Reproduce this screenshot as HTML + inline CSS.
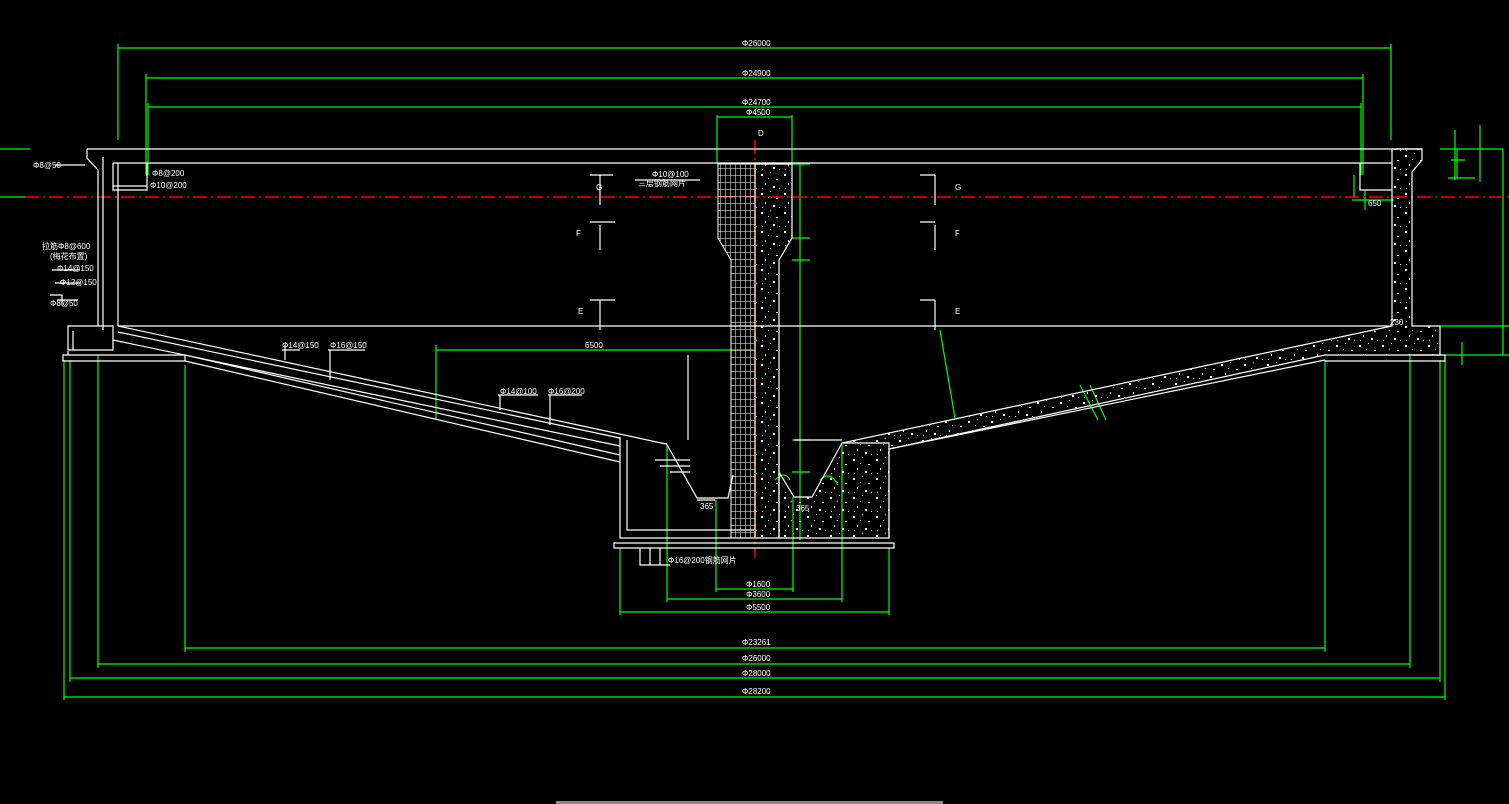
<!DOCTYPE html>
<html><head><meta charset="utf-8"><style>
html,body{margin:0;padding:0;background:#000;width:1509px;height:804px;overflow:hidden}
svg{display:block}
text{font-family:"Liberation Sans","Noto Sans CJK SC",sans-serif;fill:#fff;font-size:8px}
</style></head><body>
<svg width="1509" height="804" viewBox="0 0 1509 804" xmlns="http://www.w3.org/2000/svg">
<defs>
<pattern id="sp" width="23" height="19" patternUnits="userSpaceOnUse">
<rect x="2" y="3" width="2" height="2" fill="#fff"/><rect x="11" y="1" width="1" height="1" fill="#fff"/>
<rect x="17" y="8" width="2" height="1" fill="#fff"/><rect x="6" y="12" width="1" height="2" fill="#fff"/>
<rect x="14" y="15" width="2" height="2" fill="#fff"/><rect x="20" y="17" width="1" height="1" fill="#fff"/>
<rect x="9" y="7" width="1" height="1" fill="#fff"/><rect x="3" y="17" width="1" height="1" fill="#fff"/>
</pattern>
<pattern id="grid" width="5" height="7" patternUnits="userSpaceOnUse">
<path d="M0 0H5M0 0V7" stroke="#fff" stroke-width="1" fill="none"/>
</pattern>
</defs>

<g stroke="#0f0" stroke-width="1.2" fill="none">
<path d="M118 48H1391M118 44V140M1391 44V140"/>
<path d="M146 78H1363M146 74V175M1363 74V175"/>
<path d="M148 107H1361M148 103V175M1361 103V175"/>
<path d="M717 117H792M717 115V163M792 115V163"/>
<path d="M0 149H30M0 197H25"/>
<path d="M1503 149V355M1457 149V178M1440 149H1503M1448 178H1475M1451 160H1465M1455 130V180M1480 125V182"/>
<path d="M1440 326H1509M1445 355H1509M1462 342V365"/>
<path d="M1352 200H1394M1365 210V190M1354 175V198"/>
<path d="M800 164V540M792 164H810M792 238H810M792 260H810M792 440H810M792 472H810"/>
<path d="M436 350H754M436 345V420"/>
<path d="M940 330L955 418"/>
<path d="M1080 385L1098 420M1090 385L1106 420"/>
<path d="M716 589H793M716 500V592M793 497V592"/>
<path d="M667 599H842M667 445V602M842 443V602"/>
<path d="M620 612H889M620 548V615M889 548V615"/>
<path d="M185 648H1325M185 365V652M1325 360V652"/>
<path d="M98 664H1410M98 355V668M1410 355V668"/>
<path d="M70 678H1440M70 360V682M1440 360V682"/>
<path d="M64 697H1445M64 360V700M1445 360V700"/>
<path d="M775 480Q785 470 790 480M820 480Q830 470 838 485"/>
</g>

<g stroke="#f00" stroke-width="1.5" fill="none">
<path d="M25 197H1509" stroke-dasharray="14 4 2 4"/>
<path d="M755 140V558" stroke-dasharray="14 4 2 4"/>
</g>

<g fill="url(#sp)" stroke="#fff" stroke-width="1.2">
<path d="M755 164H792V238L779 260V538H755Z"/>
<path d="M779 440V472L794 497H812L842 443L1392 326V149H1422V160L1412 172V326H1440V355H1325L889 449V538H779Z"/>
</g>
<path d="M718 164H755V538H731V260L718 238Z" fill="url(#grid)" stroke="#fff"/>
<path d="M731 260V538" stroke="#fff" fill="none"/>

<g stroke="#fff" stroke-width="1.2" fill="none">
<path d="M87 149H1422M113 163H1392M118 326H1392"/>
<path d="M87 149V158L98 170V326M103 157V330M113 163V190H147V163M118 163V326M113 186H147"/>
<path d="M68 326H113V350H68ZM73 331V350M68 351V355"/>
<path d="M63 355H185V361H63Z"/>
<path d="M1360 163V190H1392M1412 355H1445V361H1325"/>
<path d="M118 326L666 444M118 332L620 438M113 340L620 446M185 355L620 455M185 361L620 462"/>
<path d="M620 437V538H754M627 440V530H754M614 543H894V548H614Z"/>
<path d="M666 443L697 498H728L733 475M697 500H715M640 548V565H670M650 548V565M660 548V565"/>
<path d="M655 460H690M660 466H690M670 472H690"/>
<path d="M842 443H889V538M889 449L1325 360"/>
<path d="M794 440H842"/>
<path d="M55 165H85M50 295H62V305M52 270H80M55 283H80M57 300H78"/>
<path d="M635 180H700M600 175V205M590 175H613M600 225V250M590 222H615M600 300V330M590 300H615M935 175V205M920 175H935M935 225V250M920 222H935M935 300V330M920 300H935"/>
<path d="M282 350L300 350M285 345V360M328 350H365M330 350V380M498 395H538M500 395V410M548 395H582M550 395V425"/>
<path d="M688 355V440"/>
</g>

<text x="742" y="46">Φ26000</text>
<text x="742" y="76">Φ24900</text>
<text x="742" y="105">Φ24700</text>
<text x="746" y="115">Φ4500</text>
<text x="758" y="136" font-size="10">D</text>
<text x="33" y="168" font-size="7">Φ8@50</text>
<text x="152" y="176" font-size="7">Φ8@200</text>
<text x="150" y="188" font-size="7">Φ10@200</text>
<text x="652" y="177" font-size="7">Φ10@100</text>
<text x="638" y="186" font-size="7">三层钢筋网片</text>
<text x="42" y="249" font-size="7">拉筋Φ8@600</text>
<text x="50" y="259" font-size="7">(梅花布置)</text>
<text x="57" y="271" font-size="7">Φ14@150</text>
<text x="60" y="285" font-size="7">Φ12@150</text>
<text x="50" y="306" font-size="7">Φ8@50</text>
<text x="596" y="190">G</text><text x="955" y="190">G</text>
<text x="576" y="236">F</text><text x="955" y="236">F</text>
<text x="578" y="314">E</text><text x="955" y="314">E</text>
<text x="585" y="348" font-size="7">6500</text>
<text x="282" y="348" font-size="7">Φ14@150</text>
<text x="330" y="348" font-size="7">Φ16@150</text>
<text x="500" y="394" font-size="7">Φ14@100</text>
<text x="548" y="394" font-size="7">Φ16@200</text>
<text x="700" y="509" font-size="7">365</text>
<text x="796" y="511" font-size="7">365</text>
<text x="668" y="563" font-size="7">Φ16@200钢筋网片</text>
<text x="746" y="587" font-size="7">Φ1600</text>
<text x="746" y="597" font-size="7">Φ3600</text>
<text x="746" y="610" font-size="7">Φ5500</text>
<text x="742" y="645" font-size="7">Φ23261</text>
<text x="742" y="661" font-size="7">Φ26000</text>
<text x="742" y="676" font-size="7">Φ28000</text>
<text x="742" y="694" font-size="7">Φ28200</text>
<text x="1368" y="206" font-size="7">650</text>
<text x="1390" y="325" font-size="7">230</text>
<rect x="556" y="801" width="387" height="3" fill="#888"/>
</svg>
</body></html>
